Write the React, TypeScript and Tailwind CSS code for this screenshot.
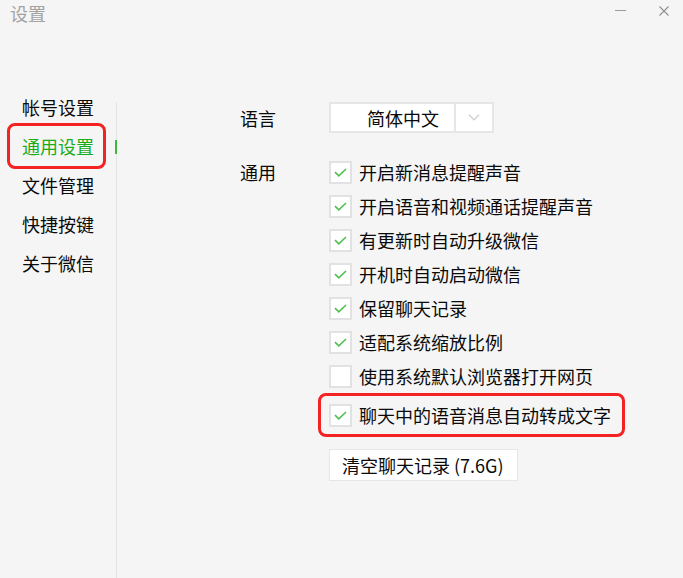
import React from "react";

const options: { label: string; checked: boolean }[] = [
  { label: "开启新消息提醒声音", checked: true },
  { label: "开启语音和视频通话提醒声音", checked: true },
  { label: "有更新时自动升级微信", checked: true },
  { label: "开机时自动启动微信", checked: true },
  { label: "保留聊天记录", checked: true },
  { label: "适配系统缩放比例", checked: true },
  { label: "使用系统默认浏览器打开网页", checked: false },
];

function Check() {
  return (
    <svg width="13" height="9" viewBox="0 0 13 9" fill="none">
      <path d="M1 4.2 L4.8 7.8 L12 1" stroke="#4fbf4f" strokeWidth="1.6" />
    </svg>
  );
}

function Box({ checked }: { checked: boolean }) {
  return (
    <div className="w-[23px] h-[23px] border-2 border-[#e2e2e2] bg-white flex items-center justify-center shrink-0">
      {checked && <Check />}
    </div>
  );
}

export default function App() {
  const nav = ["帐号设置", "通用设置", "文件管理", "快捷按键", "关于微信"];
  return (
    <div className="w-[683px] h-[578px] bg-[#f5f5f5] flex flex-col overflow-hidden font-['Noto_Sans_CJK_SC',sans-serif] text-[#0a0a0a]">
      {/* title bar */}
      <div className="h-[30px] flex items-start shrink-0">
        <span className="ml-[10px] mt-[4px] text-[18px] leading-none text-[#a3a3a3]">设置</span>
        <div className="ml-auto mt-[10px] w-[11px] h-px bg-[#9a9a9a]" />
        <svg className="ml-[33px] mt-[6px] mr-[14px]" width="10" height="10" viewBox="0 0 10 10">
          <path d="M0.5 0.5 L9.5 9.5 M9.5 0.5 L0.5 9.5" stroke="#8e8e8e" strokeWidth="1.1" />
        </svg>
      </div>

      {/* body */}
      <div className="flex flex-1">
        <div className="w-[116px] pt-[57px] flex flex-col">
          {nav.map((n, i) => (
            <div
              key={n}
              className={`relative h-[39px] flex items-center pl-[22px] text-[18px] leading-none ${
                i === 1 ? "text-[#1aad19]" : ""
              }`}
            >
              {n}
              {i === 1 && (
                <>
                  <div className="absolute right-[-1px] top-[14px] w-[2px] h-[14px] bg-[#3cb93c]" />
                  <div className="absolute left-[7px] top-[-3px] w-[99px] h-[46px] border-[3px] border-[#f52222] rounded-[8px]" />
                </>
              )}
            </div>
          ))}
        </div>
        <div className="w-px bg-[#e4e4e4] mt-[72px]" />

        <div className="flex-1 pl-[123px] pt-[72px]">
          {/* language */}
          <div className="flex items-center h-[31px]">
            <div className="w-[89px] text-[18px] leading-none pt-[1px]">语言</div>
            <div className="w-[165px] h-[31px] border-2 border-[#e6e6e6] bg-white flex">
              <div className="w-[125px] border-r-2 border-[#e6e6e6] flex items-center pl-[36px] text-[18px] leading-none">
                简体中文
              </div>
              <div className="flex-1 flex items-center justify-center">
                <svg width="12" height="7" viewBox="0 0 12 7" fill="none">
                  <path d="M0.8 0.8 L6 5.8 L11.2 0.8" stroke="#cfcfcf" strokeWidth="1.2" />
                </svg>
              </div>
            </div>
          </div>

          {/* general */}
          <div className="flex mt-[22px]">
            <div className="w-[89px] h-[34px] flex items-center text-[18px] leading-none">通用</div>
            <div className="flex flex-col">
              {options.map((o) => (
                <div key={o.label} className="h-[34px] flex items-center">
                  <Box checked={o.checked} />
                  <span className="ml-[7px] text-[18px] leading-none">{o.label}</span>
                </div>
              ))}
              <div className="relative h-[34px] flex items-center mt-[5px]">
                <Box checked />
                <span className="ml-[7px] text-[18px] leading-none">聊天中的语音消息自动转成文字</span>
                <div className="absolute left-[-11px] top-[-5px] w-[307px] h-[44px] border-[3px] border-[#f52222] rounded-[8px]" />
              </div>
              <div className="mt-[17px] w-[189px] h-[32px] border border-[#e6e6e6] bg-white flex items-center pl-[12px] text-[18px] leading-none">
                清空聊天记录 (7.6G)
              </div>
            </div>
          </div>
        </div>
      </div>
    </div>
  );
}
